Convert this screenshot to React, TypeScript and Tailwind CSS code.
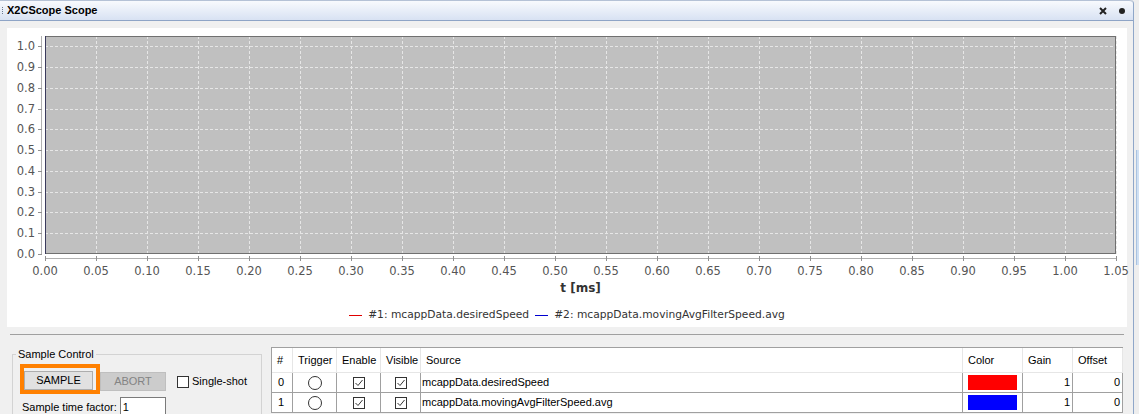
import React from 'react';

// plot geometry inside the white chart panel (panel sits at x=7, y=28)
const X0 = 38;
const X1 = 1109;
const Y0 = 8;
const Y1 = 226;
const px = (u: number) => X0 + (u * (X1 - X0)) / 1.05;
const py = (v: number) => Y1 - (v * (Y1 - Y0)) / 1.05;

const xTicks = Array.from({ length: 22 }, (_, i) => i * 0.05);
const yTicks = Array.from({ length: 11 }, (_, i) => i * 0.1);

const TitleBar: React.FC = () => (
  <div className="shrink-0 h-[21px] flex items-center bg-gradient-to-b from-[#f8fafd] to-[#d8e2f3] border-t border-[#b5c2d6] border-b border-b-[#8ea4c6] rounded-tr-[4px]">
    <div className="ml-[2px] w-[2px] flex flex-col gap-[1px]">
      {[0, 1, 2, 3].map((i) => (
        <div key={i} className="w-[1px] h-[1px] bg-[#6b7a90]" />
      ))}
    </div>
    <span className="ml-[3px] text-[11px] font-bold text-black leading-none">X2CScope Scope</span>
    <div className="flex-1" />
    <svg width="8" height="8" viewBox="0 0 8 8" className="mr-[12px]">
      <path d="M1 1 L7 7 M7 1 L1 7" stroke="#222" strokeWidth="2" />
    </svg>
    <svg width="6" height="6" viewBox="0 0 6 6" className="mr-[8px]">
      <circle cx="3" cy="3" r="3" fill="#222" />
    </svg>
  </div>
);

const Chart: React.FC = () => (
  <div className="shrink-0 ml-[7px] mt-[7px] w-[1120px] h-[299px] bg-white flex flex-col">
    <svg width="1120" height="253" overflow="visible" className="block shrink-0" style={{ fontFamily: '"DejaVu Sans", sans-serif' }}>
      <rect x={X0} y={Y0} width={X1 - X0} height={Y1 - Y0} fill="#c0c0c0" />
      {xTicks.slice(1).map((u) => (
        <line key={'gx' + u} x1={px(u) + 0.5} x2={px(u) + 0.5} y1={Y0} y2={Y1} stroke="#e6e6e6" strokeDasharray="3 2" />
      ))}
      {yTicks.slice(1).map((v) => (
        <line key={'gy' + v} x1={X0} x2={X1} y1={Math.round(py(v)) + 0.5} y2={Math.round(py(v)) + 0.5} stroke="#e6e6e6" strokeDasharray="3 2" />
      ))}
      <rect x={X0 + 0.5} y={Y0 + 0.5} width={X1 - X0 - 1} height={Y1 - Y0 - 1} fill="none" stroke="#707070" />
      <line x1={X0 + 0.5} x2={X0 + 0.5} y1={Y0} y2={Y1} stroke="#3a3a5c" />

      {/* y axis */}
      <line x1={34.5} x2={34.5} y1={Y0} y2={Y1} stroke="#b0b0b0" />
      {yTicks.map((v) => (
        <g key={'ty' + v}>
          <line x1={31} x2={35} y1={Math.round(py(v)) + 0.5} y2={Math.round(py(v)) + 0.5} stroke="#909090" />
          <text x={28} y={py(v) + 4} textAnchor="end" fontSize="11.5" fill="#555">
            {v.toFixed(1)}
          </text>
        </g>
      ))}

      {/* x axis */}
      <line x1={X0} x2={X1} y1={230.5} y2={230.5} stroke="#b0b0b0" />
      {xTicks.map((u) => (
        <g key={'tx' + u}>
          <line x1={px(u) + 0.5} x2={px(u) + 0.5} y1={228} y2={233} stroke="#909090" />
          <text x={px(u)} y={247} textAnchor="middle" fontSize="11.5" fill="#555">
            {u.toFixed(2)}
          </text>
        </g>
      ))}
    </svg>
    <div className="pl-[38px] pr-[11px] text-center text-[12px] font-bold text-[#333] leading-[15px] font-['DejaVu_Sans',sans-serif]">
      t [ms]
    </div>
    <div className="mt-[12px] flex justify-center items-center gap-[6px] text-[10.7px] text-[#333] leading-[14px] font-['DejaVu_Sans',sans-serif]">
      <div className="w-[13px] h-px bg-[#e00000]" />
      <span>#1: mcappData.desiredSpeed</span>
      <div className="w-[13px] h-px bg-[#0000d0]" />
      <span>#2: mcappData.movingAvgFilterSpeed.avg</span>
    </div>
  </div>
);

const CheckMark: React.FC = () => (
  <div className="w-[12px] h-[12px] border border-[#333] bg-white">
    <svg width="10" height="10" viewBox="0 0 10 10" className="block">
      <path d="M1.5 5 L4 7.5 L8.5 2" fill="none" stroke="#333" strokeWidth="1" />
    </svg>
  </div>
);

const Radio: React.FC = () => (
  <div className="w-[14px] h-[14px] rounded-full border border-[#333] bg-white" />
);

const rows = [
  { id: 0, source: 'mcappData.desiredSpeed', color: 'bg-[#ff0000]' },
  { id: 1, source: 'mcappData.movingAvgFilterSpeed.avg', color: 'bg-[#0000ff]' },
];

const headers = ['#', 'Trigger', 'Enable', 'Visible', 'Source', 'Color', 'Gain', 'Offset'];

const ChannelTable: React.FC = () => {
  const cell = 'h-[20px] border-r border-b border-[#a0a0a0] bg-white flex items-center';
  return (
    <div className="shrink-0 ml-[9px] mt-[12px] w-[852px] border-l border-t border-[#a0a0a0] grid grid-cols-[21px_44px_44px_40px_542px_60px_50px_50px] text-[11px] text-black">
      {headers.map((h) => (
        <div key={h} className="h-[25px] border-r border-b border-[#e6e6e6] bg-white flex items-center pl-[5px]">
          {h}
        </div>
      ))}
      {rows.map((r) => (
        <React.Fragment key={r.id}>
          <div className={cell + ' pl-[6px]'}>{r.id}</div>
          <div className={cell + ' justify-center'}>
            <Radio />
          </div>
          <div className={cell + ' justify-center'}>
            <CheckMark />
          </div>
          <div className={cell + ' justify-center'}>
            <CheckMark />
          </div>
          <div className={cell + ' pl-[1px]'}>{r.source}</div>
          <div className={cell + ' pl-[5px]'}>
            <div className={'w-[49px] h-[15px] ' + r.color} />
          </div>
          <div className={cell + ' justify-end pr-[2px]'}>1</div>
          <div className={cell + ' justify-end pr-[2px]'}>0</div>
        </React.Fragment>
      ))}
    </div>
  );
};

const SampleControl: React.FC = () => (
  <fieldset className="shrink-0 ml-[12px] mt-[13px] w-[250px] h-[80px] border border-[#d3d3d3] pl-[7px] text-[11px] text-black">
    <legend className="ml-[-4px] px-[2px] leading-[13px]">Sample Control</legend>
    <div className="mt-[3px] flex items-start">
      <div className="shrink-0 w-[80px] h-[30px] border-4 border-[#ff8000] pt-[3px]">
        <div className="w-[69px] h-[19px] border border-[#adadad] bg-[#e1e1e1] flex items-center justify-center">SAMPLE</div>
      </div>
      <div className="shrink-0 mt-[8px] w-[66px] h-[19px] border border-[#bfbfbf] bg-[#cccccc] text-[#838383] flex items-center justify-center">
        ABORT
      </div>
      <div className="shrink-0 ml-[11px] mt-[12px] w-[12px] h-[12px] border border-[#333] bg-white" />
      <span className="ml-[3px] mt-[10px] leading-[14px] whitespace-nowrap">Single-shot</span>
    </div>
    <div className="flex items-start">
      <span className="ml-[2px] mt-[6px] leading-[14px] whitespace-nowrap">Sample time factor:</span>
      <div className="shrink-0 ml-[3px] mt-[3px] w-[46px] h-[20px] border border-[#7a7a7a] bg-white pl-[2px] leading-[18px]">1</div>
    </div>
  </fieldset>
);

export default function App() {
  return (
    <div className="w-[1139px] h-[414px] overflow-hidden flex bg-[#eeeeee] font-['Liberation_Sans',Arial,sans-serif]">
      <div className="shrink-0 w-[1134px] h-full flex flex-col bg-[#f0f0f0] border-r border-[#8fa7c9] rounded-tr-[4px]">
        <TitleBar />
        <Chart />
        <div className="shrink-0 ml-[10px] mt-[7px] w-[1114px] h-px bg-[#a0a0a0]" />
        <div className="shrink-0 flex items-start">
          <SampleControl />
          <ChannelTable />
        </div>
      </div>
      <div className="flex-1 flex flex-col">
        <div className="h-[150px] shrink-0" />
        <div className="shrink-0 ml-[2px] w-[3px] h-[115px] bg-[#cfe0f3] border-l border-[#a9c2e0]" />
      </div>
    </div>
  );
}
